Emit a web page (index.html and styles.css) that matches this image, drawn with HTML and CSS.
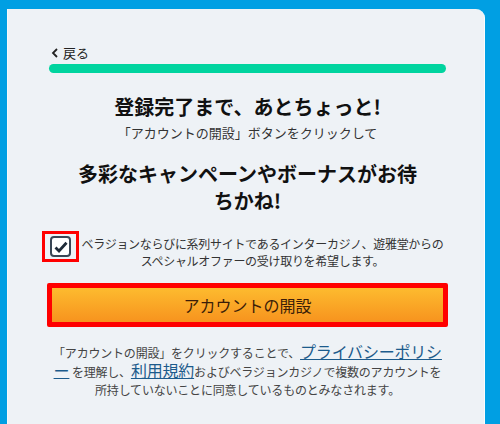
FILE: index.html
```html
<!DOCTYPE html>
<html lang="ja">

<head>
    <meta charset="UTF-8">
    <meta name="viewport" content="width=device-width, initial-scale=1.0">
    <title>アカウントの開設</title>
    <link rel="stylesheet" href="styles.css">
</head>

<body>
    <div class="card">
        <a class="back-link" href="#">
            <svg class="back-icon" width="8" height="10" viewBox="0 0 8 10">
                <path d="M6 1 L2 5 L6 9" fill="none" stroke="#222" stroke-width="1.8" />
            </svg>
            戻る
        </a>
        <div class="progress"></div>

        <h1 class="title">登録完了まで、あとちょっと!</h1>
        <p class="subtitle">「アカウントの開設」ボタンをクリックして</p>

        <h2 class="promo">多彩なキャンペーンやボーナスがお待ちかね!</h2>

        <label class="optin">
            <span class="check-mark">
                <span class="checkbox">
                    <svg width="14" height="12" viewBox="0 0 14 12">
                        <path d="M1.5 6.5 L5 10 L12.5 1.8" fill="none" stroke="#1e2a38" stroke-width="2.8" />
                    </svg>
                </span>
            </span>
            <span class="optin-text">ベラジョンならびに系列サイトであるインターカジノ、遊雅堂からのスペシャルオファーの受け取りを希望します。</span>
        </label>

        <div class="submit-wrap">
            <button class="submit-btn">アカウントの開設</button>
        </div>

        <p class="terms">「アカウントの開設」をクリックすることで、<a href="#">プライバシーポリシー</a> を理解し、<a href="#">利用規約</a>およびベラジョンカジノで複数のアカウントを所持していないことに同意しているものとみなされます。</p>
    </div>
</body>

</html>
```

FILE: styles.css
```css
body {
    margin: 0;
    padding: 9px 0 0 7px;
    background-color: #009fe3;
    font-family: "Noto Sans CJK JP", "Noto Sans", sans-serif;
    color: #222;
    height: 424px;
    box-sizing: border-box;
    overflow: hidden;
}

.card {
    width: 478px;
    height: 415px;
    box-sizing: border-box;
    background-color: #eef2f6;
    border-left: 1px solid #f6f9fb;
    border-right: 1px solid #fbfdfe;
    border-radius: 0 9px 0 0;
    padding: 34px 38px 0 41px;
}

.back-link {
    display: flex;
    align-items: center;
    gap: 4px;
    font-size: 13px;
    line-height: 20px;
    color: #222;
    text-decoration: none;
    padding-left: 2px;
}

.progress {
    height: 9px;
    margin-top: 1px;
    border-radius: 5px;
    background-color: #00d49f;
}

.title {
    margin: 20px 0 0;
    text-align: center;
    font-size: 20px;
    line-height: 28px;
    font-weight: bold;
    color: #111;
}

.subtitle {
    margin: 0;
    text-align: center;
    font-size: 13px;
    line-height: 24px;
    color: #333;
}

.promo {
    max-width: 346px;
    margin: 15px auto 0;
    text-align: center;
    font-size: 20px;
    line-height: 27px;
    font-weight: bold;
    color: #111;
}

.optin {
    display: flex;
    align-items: flex-start;
    margin-top: 17px;
}

.check-mark {
    flex: none;
    margin-left: -7px;
    padding: 2px 5px;
    border: 3px solid #ff0000;
}

.checkbox {
    width: 21px;
    height: 21px;
    box-sizing: border-box;
    display: flex;
    align-items: center;
    justify-content: center;
    background: #fff;
    border: 2px solid #3a4756;
    border-radius: 4px;
}

.optin-text {
    text-align: center;
    font-size: 12px;
    line-height: 17px;
    letter-spacing: -0.3px;
    color: #333;
    margin-top: 4px;
}

.submit-wrap {
    margin: 14px -2px 0 -2px;
    border: 5px solid #ff0000;
    border-radius: 2px;
}

.submit-btn {
    display: block;
    width: 100%;
    height: 34px;
    border: none;
    background: linear-gradient(#fdbb2f, #f7931e);
    font-family: inherit;
    font-size: 16px;
    color: #3b1d08;
    cursor: pointer;
}

.terms {
    margin: 16px 0 0;
    text-align: center;
    font-size: 12px;
    line-height: 18px;
    letter-spacing: -0.2px;
    color: #444;
}

.terms a {
    font-size: 16px;
    line-height: 16px;
    color: #1c5b8c;
    text-decoration: underline;
}
```
